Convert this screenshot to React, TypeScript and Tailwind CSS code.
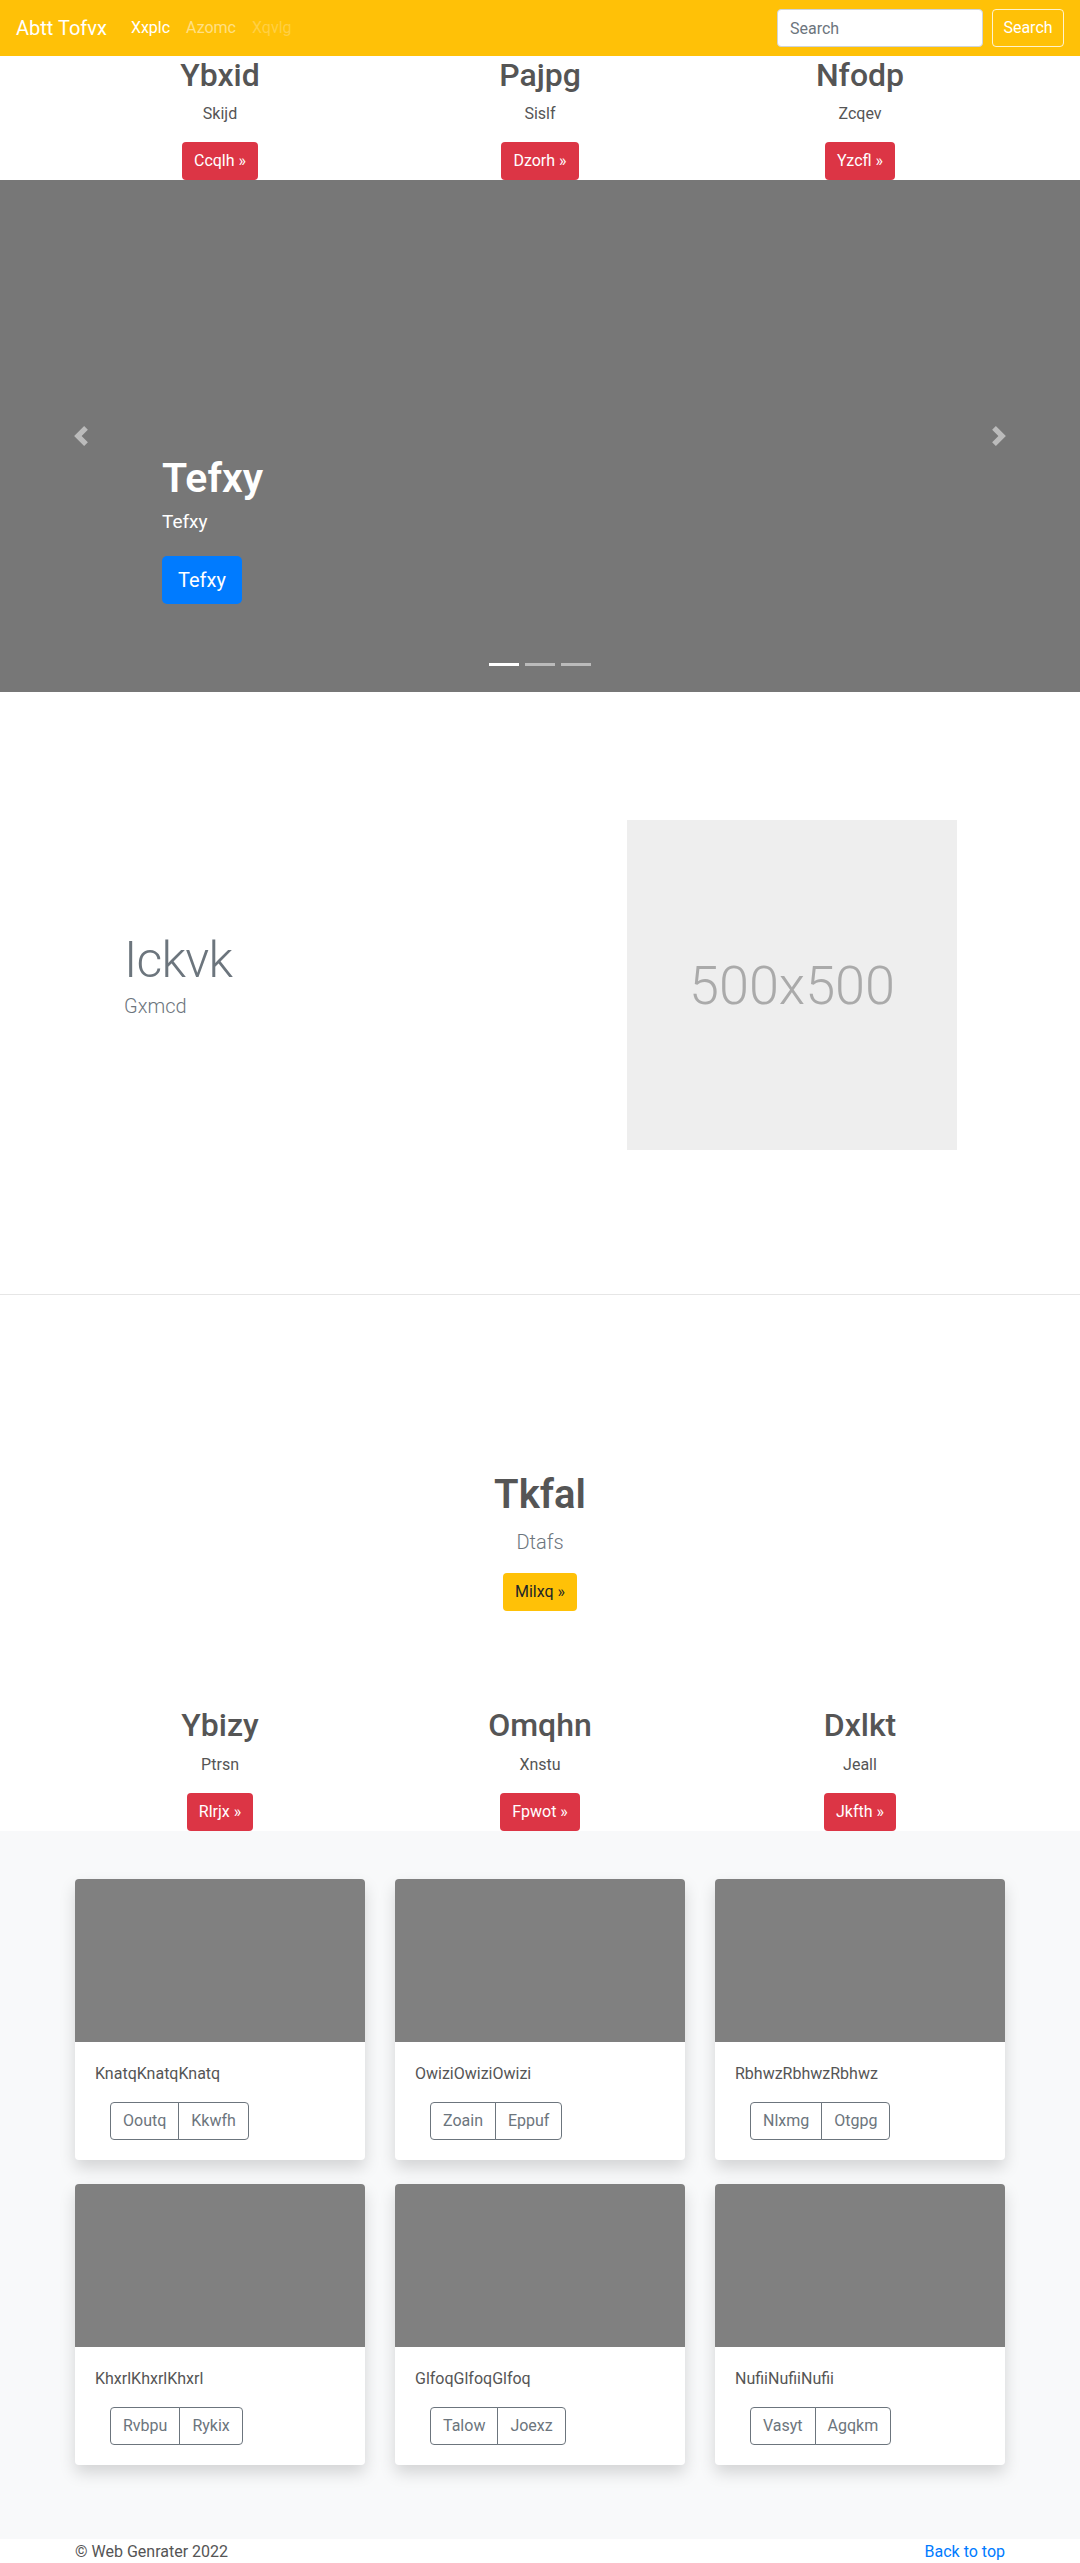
import React from "react";

const topCols = [
  { h: "Ybxid", p: "Skijd", b: "Ccqlh »" },
  { h: "Pajpg", p: "Sislf", b: "Dzorh »" },
  { h: "Nfodp", p: "Zcqev", b: "Yzcfl »" },
];

const midCols = [
  { h: "Ybizy", p: "Ptrsn", b: "Rlrjx »" },
  { h: "Omqhn", p: "Xnstu", b: "Fpwot »" },
  { h: "Dxlkt", p: "Jeall", b: "Jkfth »" },
];

const cards = [
  { t: "KnatqKnatqKnatq", a: "Ooutq", b: "Kkwfh" },
  { t: "OwiziOwiziOwizi", a: "Zoain", b: "Eppuf" },
  { t: "RbhwzRbhwzRbhwz", a: "Nlxmg", b: "Otgpg" },
  { t: "KhxrlKhxrlKhxrl", a: "Rvbpu", b: "Rykix" },
  { t: "GlfoqGlfoqGlfoq", a: "Talow", b: "Joexz" },
  { t: "NufiiNufiiNufii", a: "Vasyt", b: "Agqkm" },
];

function Col({ h, p, b }: { h: string; p: string; b: string }) {
  return (
    <div className="flex flex-col items-center text-center">
      <h2 className="text-[32px] leading-[38.4px] font-medium text-[#555] mb-2">{h}</h2>
      <p className="text-base leading-6 text-[#555] mb-4">{p}</p>
      <a className="inline-flex items-center h-[38px] px-3 rounded bg-[#dc3545] text-white text-base">{b}</a>
    </div>
  );
}

export default function App() {
  return (
    <div className="bg-white font-['Roboto','Liberation_Sans',sans-serif] text-[#212529]">
      {/* Navbar */}
      <nav className="h-14 bg-[#ffc107] flex items-center px-4">
        <a className="text-white text-[20px] leading-[30px] mr-6">Abtt Tofvx</a>
        <div className="flex gap-4 text-base">
          <a className="text-white">Xxplc</a>
          <a className="text-white/50">Azomc</a>
          <a className="text-white/25">Xqvlg</a>
        </div>
        <div className="ml-auto flex gap-[9px]">
          <input
            placeholder="Search"
            className="w-[206px] h-[38px] rounded bg-white border border-[#ced4da] px-3 text-base text-[#495057] placeholder:text-[#6c757d] outline-none"
          />
          <button className="h-[38px] w-[72px] rounded border border-white/80 text-white text-base">Search</button>
        </div>
      </nav>

      {/* Top columns */}
      <section className="w-[960px] mx-auto grid grid-cols-3">
        {topCols.map((c) => (
          <Col key={c.h} {...c} />
        ))}
      </section>

      {/* Carousel */}
      <section className="relative h-[512px] bg-[#777]">
        <div className="absolute left-0 top-0 bottom-0 w-[15%] flex items-center justify-center opacity-50">
          <svg width="20" height="20" viewBox="0 0 8 8" fill="#fff">
            <path d="M5.25 0l-4 4 4 4 1.5-1.5L4.25 4l2.5-2.5L5.25 0z" />
          </svg>
        </div>
        <div className="absolute right-0 top-0 bottom-0 w-[15%] flex items-center justify-center opacity-50">
          <svg width="20" height="20" viewBox="0 0 8 8" fill="#fff">
            <path d="M2.75 0l-1.5 1.5L3.75 4l-2.5 2.5L2.75 8l4-4-4-4z" />
          </svg>
        </div>
        <div className="absolute left-[15%] top-[274px] text-white">
          <h1 className="text-[41px] leading-[48px] font-semibold mb-[6px]">Tefxy</h1>
          <p className="text-[19px] leading-[27px] mb-[21px]">Tefxy</p>
          <a className="inline-flex items-center h-12 px-4 rounded-[5px] bg-[#007bff] text-white text-[20px]">Tefxy</a>
        </div>
        <div className="absolute bottom-[26px] left-0 right-0 flex justify-center">
          <span className="w-[30px] h-[3px] mx-[3px] bg-white" />
          <span className="w-[30px] h-[3px] mx-[3px] bg-white/50" />
          <span className="w-[30px] h-[3px] mx-[3px] bg-white/50" />
        </div>
      </section>

      {/* Featurette */}
      <section className="pt-[128px] pb-[144px] pl-[124px] grid grid-cols-[503px_330px] items-start">
        <div className="mt-[115px]">
          <h2 className="text-[50px] leading-[50px] font-light tracking-[-0.8px] text-[#6c757d] mb-[6px]">Ickvk</h2>
          <p className="text-[20px] leading-[30px] font-light text-[#6c757d]">Gxmcd</p>
        </div>
        <div className="w-[330px] h-[330px] bg-[#eee] flex items-center justify-center">
          <span className="text-[54px] text-[#aaa] font-light">500x500</span>
        </div>
      </section>

      <hr className="border-0 border-t border-[#e6e6e6]" />

      {/* Jumbotron-ish */}
      <section className="pt-[176px] flex flex-col items-center text-center">
        <h1 className="text-[40px] leading-[48px] font-semibold text-[#555] mb-2">Tkfal</h1>
        <p className="text-[20px] leading-[30px] font-light text-[#6c757d] mb-4">Dtafs</p>
        <a className="inline-flex items-center h-[38px] px-3 rounded bg-[#ffc107] text-[#212529] text-base">Milxq »</a>
      </section>

      {/* Middle columns */}
      <section className="w-[960px] mx-auto grid grid-cols-3 pt-[95px]">
        {midCols.map((c) => (
          <Col key={c.h} {...c} />
        ))}
      </section>

      {/* Album */}
      <section className="bg-[#f8f9fa] pt-12 pb-[74px]">
        <div className="w-[960px] mx-auto px-[15px] grid grid-cols-3 gap-x-[30px] gap-y-6">
          {cards.map((c) => (
            <div key={c.t} className="bg-white rounded shadow-[0_8px_16px_rgba(0,0,0,0.15)] overflow-hidden">
              <div className="h-[163px] bg-[#808080]" />
              <div className="p-5">
                <p className="text-base leading-6 text-[#555] mb-4">{c.t}</p>
                <div className="flex ml-[15px]">
                  <button className="h-[38px] px-3 border border-[#6c757d] rounded-l text-[#6c757d] text-base">{c.a}</button>
                  <button className="h-[38px] px-3 border border-[#6c757d] -ml-px rounded-r text-[#6c757d] text-base">{c.b}</button>
                </div>
              </div>
            </div>
          ))}
        </div>
      </section>

      {/* Footer */}
      <footer className="w-[960px] mx-auto px-[15px] pt-px pb-12 flex justify-between text-base leading-6">
        <p className="text-[#555]">© Web Genrater 2022</p>
        <a className="text-[#007bff]">Back to top</a>
      </footer>
    </div>
  );
}
